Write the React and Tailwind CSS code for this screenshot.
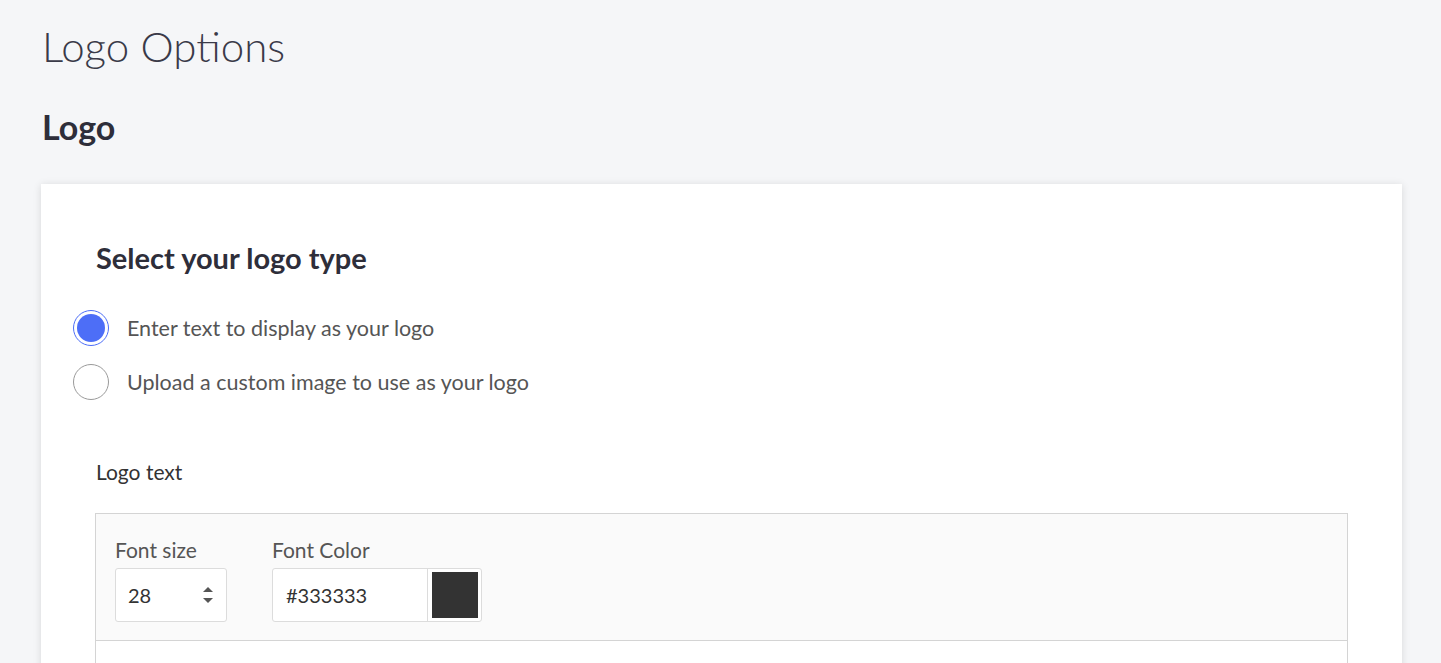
import React from "react";

function Radio({ checked, label }) {
  return (
    <label className="flex h-[54px] items-center ml-[-23px]">
      <span
        className={
          checked
            ? "flex h-[36px] w-[36px] items-center justify-center rounded-full border border-[#4d6ef7] bg-white"
            : "flex h-[36px] w-[36px] items-center justify-center rounded-full border border-[#9a9a9a] bg-white"
        }
      >
        {checked && <span className="h-[28px] w-[28px] rounded-full bg-[#4d6ef7]" />}
      </span>
      <span className="ml-[18px] text-[21.5px] leading-[24px] text-[#555]">{label}</span>
    </label>
  );
}

export default function App() {
  return (
    <div
      className="min-h-screen bg-[#f5f6f8] px-[41px] pt-[18px] text-[#333]"
      style={{ fontFamily: "Lato, 'Noto Sans', sans-serif" }}
    >
      <h1 className="ml-[1px] text-[42px] font-light leading-[56px] text-[#3a3a48]">Logo Options</h1>
      <h2 className="ml-[1px] mt-[33px] text-[34px] font-bold leading-[40px] text-[#2e2e3a]">Logo</h2>
      <div className="mt-[37px] w-[1361px] bg-white px-[55px] pt-[57px] pb-[40px] shadow-[0_1px_8px_rgba(0,0,0,0.12)]">
        <h3 className="text-[29px] font-bold leading-[34px] text-[#2e2e3a]">Select your logo type</h3>
        <div className="mt-[26px] flex flex-col">
          <Radio checked label="Enter text to display as your logo" />
          <Radio label="Upload a custom image to use as your logo" />
        </div>
        <div className="mt-[51px] text-[21px] leading-[24px] text-[#333]">Logo text</div>
        <div className="mx-[-1px] mt-[29px] border border-[#d4d4d4]">
          <div className="flex gap-[45px] bg-[#fafafa] pl-[19px] pt-[24px] pb-[18px]">
            <div className="flex flex-col">
              <span className="text-[21px] leading-[24px] text-[#555]">Font size</span>
              <div className="mt-[6px] flex h-[54px] w-[112px] items-center justify-between rounded-[3px] border border-[#dcdcdc] bg-white pl-[12px] pr-[11px]">
                <span className="text-[20px] text-[#333]">28</span>
                <svg width="14" height="22" viewBox="0 0 14 22">
                  <path d="M2 8 L7 3 L12 8 Z" fill="#555" />
                  <path d="M2 14 L7 19 L12 14 Z" fill="#555" />
                </svg>
              </div>
            </div>
            <div className="flex flex-col">
              <span className="text-[21px] leading-[24px] text-[#555]">Font Color</span>
              <div className="mt-[6px] flex h-[54px] w-[210px] items-stretch rounded-[3px] border border-[#dcdcdc] bg-white">
                <div className="flex flex-1 items-center pl-[13px] text-[20px] text-[#333]">#333333</div>
                <div className="flex w-[54px] items-center justify-center border-l border-[#dcdcdc]">
                  <span className="h-[46px] w-[46px] bg-[#333333]" />
                </div>
              </div>
            </div>
          </div>
          <div className="h-[60px] border-t border-[#d4d4d4] bg-white" />
        </div>
      </div>
    </div>
  );
}
